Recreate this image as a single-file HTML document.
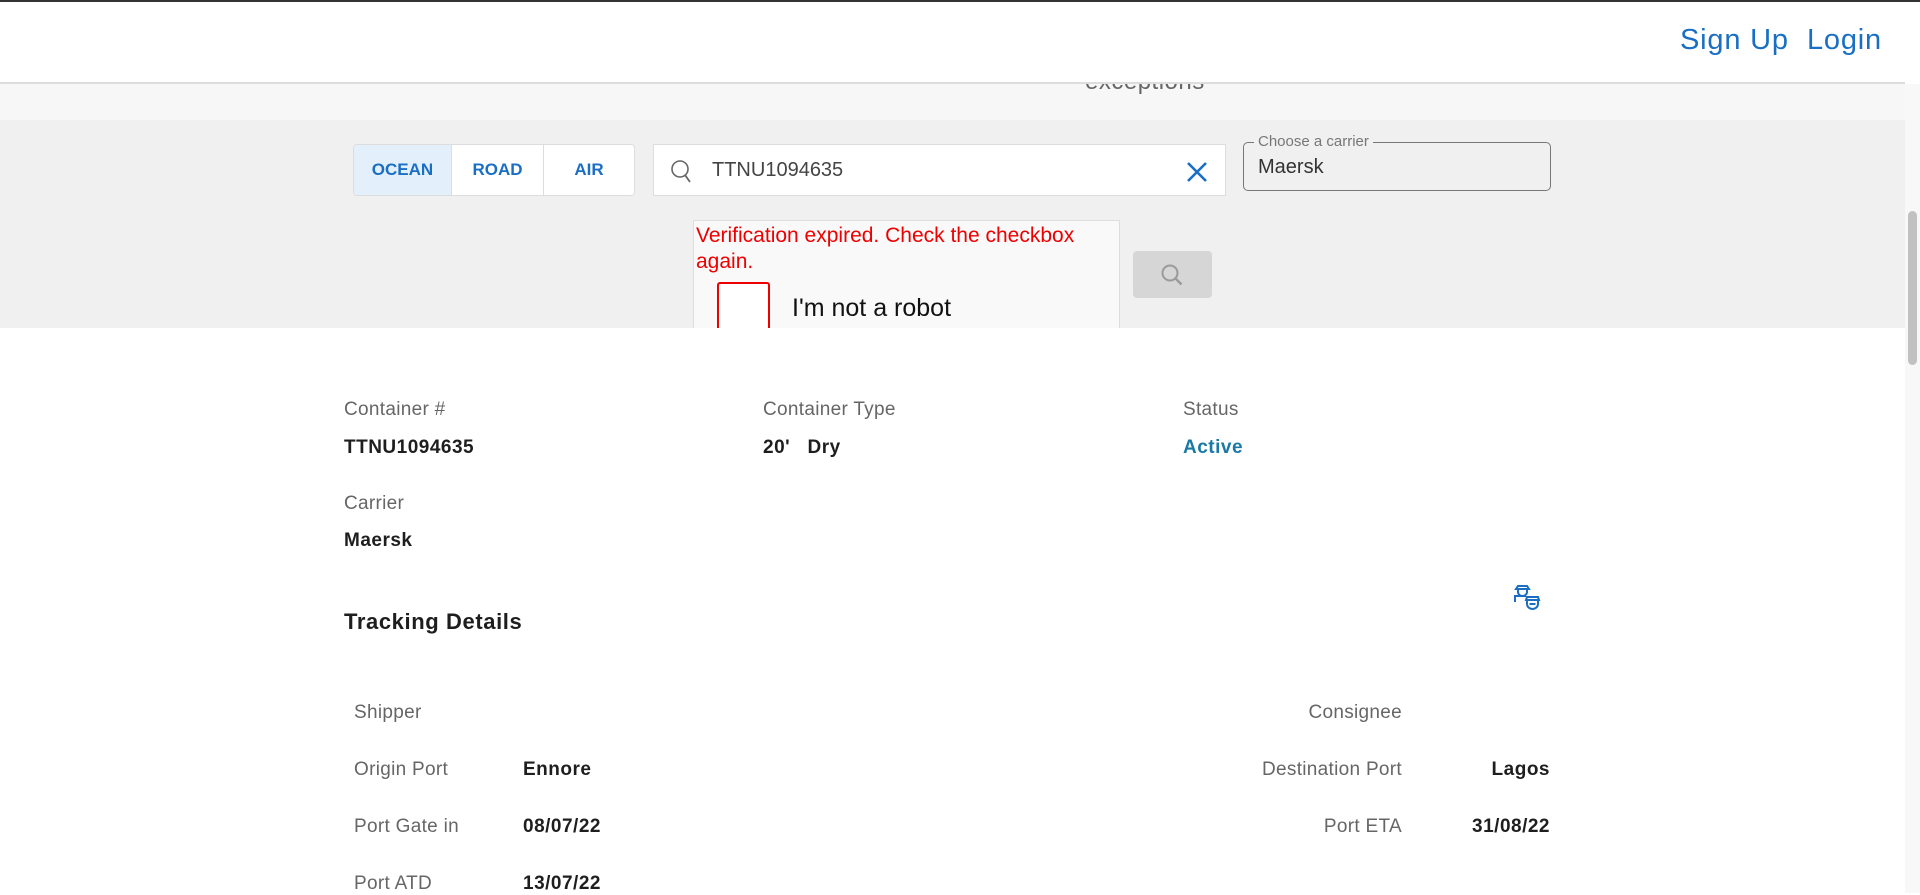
<!DOCTYPE html>
<html><head><meta charset="utf-8"><style>
*{margin:0;padding:0;box-sizing:border-box}
body{width:1920px;height:893px;overflow:hidden;background:#fff;font-family:"Liberation Sans",sans-serif;position:relative;color:#222}
.a{position:absolute;white-space:nowrap}
.lbl{font-size:19px;color:#666;letter-spacing:0.3px}
.val{font-size:19px;font-weight:bold;color:#1e1e1e;letter-spacing:0.5px}
</style></head><body>
<div class="a" style="left:0;top:0;width:1920px;height:2px;background:#333"></div>
<div class="a" style="left:0;top:82px;width:1905px;height:2px;background:#ddd"></div>
<div class="a" style="left:1680px;top:24px;font-size:29px;color:#1a6fc4;letter-spacing:0.8px">Sign Up</div>
<div class="a" style="left:1807px;top:24px;font-size:29px;color:#1a6fc4;letter-spacing:0.8px">Login</div>
<div class="a" style="left:0;top:84px;width:1905px;height:36px;background:#f7f7f7;overflow:hidden">
 <div class="a" style="left:1085px;top:-16px;font-size:24px;color:#666;letter-spacing:0.5px">exceptions</div></div>
<div class="a" style="left:0;top:120px;width:1905px;height:208px;background:#f0f0f0"></div>
<div class="a" style="left:353px;top:144px;width:282px;height:52px;background:#fff;border:1px solid #ddd;border-radius:4px;overflow:hidden;font-size:17px;font-weight:bold;color:#1a6fc4">
 <div class="a" style="left:0;top:0;width:98px;height:50px;background:#e3f0fb;border-right:1px solid #ddd;line-height:50px;text-align:center">OCEAN</div>
 <div class="a" style="left:98px;top:0;width:92px;height:50px;border-right:1px solid #ddd;line-height:50px;text-align:center">ROAD</div>
 <div class="a" style="left:190px;top:0;width:90px;height:50px;line-height:50px;text-align:center">AIR</div>
</div>
<div class="a" style="left:653px;top:144px;width:573px;height:52px;background:#fff;border:1px solid #ddd">
 <svg class="a" style="left:16px;top:14px" width="24" height="26" viewBox="0 0 24 26"><circle cx="10" cy="10" r="8" fill="none" stroke="#666" stroke-width="1.6"/><path d="M15 16l5 7" stroke="#666" stroke-width="1.8"/></svg>
 <div class="a" style="left:58px;top:14px;font-size:20px;color:#444">TTNU1094635</div>
 <svg class="a" style="left:532px;top:16px" width="22" height="22" viewBox="0 0 22 22"><path d="M2 2L20 20M20 2L2 20" stroke="#1a6fc4" stroke-width="2.6"/></svg>
</div>
<div class="a" style="left:1243px;top:142px;width:308px;height:49px;border:1px solid #777;border-radius:5px">
 <div class="a" style="left:10px;top:-10px;background:#f0f0f0;padding:0 4px;font-size:15px;color:#777">Choose a carrier</div>
 <div class="a" style="left:14px;top:13px;font-size:20px;color:#333">Maersk</div>
</div>
<div class="a" style="left:693px;top:220px;width:427px;height:108px;background:#f9f9f9;border:1px solid #ddd;border-bottom:none;overflow:hidden">
 <div class="a" style="left:2px;top:2px;font-size:21px;color:#e00;white-space:normal;width:420px;line-height:26px">Verification expired. Check the checkbox again.</div>
 <div class="a" style="left:23px;top:61px;width:53px;height:60px;border:2px solid #e00;border-radius:3px;background:#fff"></div>
 <div class="a" style="left:98px;top:73px;font-size:25px;color:#111">I'm not a robot</div>
</div>
<div class="a" style="left:1133px;top:251px;width:79px;height:47px;background:#d6d6d6;border-radius:4px">
 <svg class="a" style="left:27px;top:12px" width="26" height="26" viewBox="0 0 26 26"><circle cx="10" cy="10" r="7.5" fill="none" stroke="#9a9a9a" stroke-width="2"/><path d="M15.5 15.5l6 6" stroke="#9a9a9a" stroke-width="2.4"/></svg>
</div>
<div class="a" style="left:1905px;top:84px;width:15px;height:809px;background:#f8f8f8"></div>
<div class="a" style="left:1908px;top:211px;width:9px;height:154px;background:#c1c1c1;border-radius:5px"></div>

<div class="a lbl" style="left:344px;top:399px">Container #</div>
<div class="a val" style="left:344px;top:437px">TTNU1094635</div>
<div class="a lbl" style="left:763px;top:399px">Container Type</div>
<div class="a val" style="left:763px;top:437px">20'&nbsp;&nbsp;&nbsp;Dry</div>
<div class="a lbl" style="left:1183px;top:399px">Status</div>
<div class="a val" style="left:1183px;top:437px;color:#1b79a6">Active</div>
<div class="a lbl" style="left:344px;top:493px">Carrier</div>
<div class="a val" style="left:344px;top:530px">Maersk</div>
<div class="a" style="left:344px;top:609px;font-size:22px;font-weight:bold;color:#1e1e1e;letter-spacing:0.6px">Tracking Details</div>
<svg class="a" style="left:1512px;top:581px" width="34" height="34" viewBox="0 0 34 34" fill="none" stroke="#1a6fc4" stroke-width="2"><path d="M6 5h9l2 3H4z"/><path d="M6 9v2a4.5 4 0 0 0 9 0V9"/><path d="M3 21v-6h11"/><path d="M15 16h11l1 3H14z"/><path d="M15 20v3a5.5 5 0 0 0 11 0v-3"/><path d="M17.5 23h6"/></svg>

<div class="a lbl" style="left:354px;top:702px">Shipper</div>
<div class="a lbl" style="left:1240px;top:702px;width:162px;text-align:right">Consignee</div>
<div class="a lbl" style="left:354px;top:759px">Origin Port</div>
<div class="a val" style="left:523px;top:759px">Ennore</div>
<div class="a lbl" style="left:1180px;top:759px;width:222px;text-align:right">Destination Port</div>
<div class="a val" style="left:1400px;top:759px;width:150px;text-align:right">Lagos</div>
<div class="a lbl" style="left:354px;top:816px">Port Gate in</div>
<div class="a val" style="left:523px;top:816px">08/07/22</div>
<div class="a lbl" style="left:1240px;top:816px;width:162px;text-align:right">Port ETA</div>
<div class="a val" style="left:1400px;top:816px;width:150px;text-align:right">31/08/22</div>
<div class="a lbl" style="left:354px;top:873px">Port ATD</div>
<div class="a val" style="left:523px;top:873px">13/07/22</div>
</body></html>
